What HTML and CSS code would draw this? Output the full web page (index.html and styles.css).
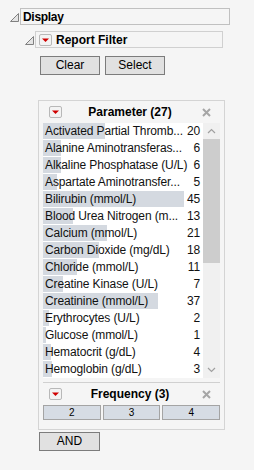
FILE: index.html
```html
<!DOCTYPE html>
<html>
<head>
<meta charset="utf-8">
<link rel="stylesheet" href="styles.css">
</head>
<body>
<div class="report">
  <div class="ohead lvl1">
    <svg class="tri" width="9" height="9" viewBox="0 0 9 9"><polygon points="0.5,8.5 8.5,0.5 8.5,8.5" fill="#e4e4e4" stroke="#808080" stroke-width="1"/></svg>
    <div class="obox bigbox">Display</div>
  </div>
  <div class="ohead lvl2">
    <svg class="tri" width="9" height="9" viewBox="0 0 9 9"><polygon points="0.5,8.5 8.5,0.5 8.5,8.5" fill="#e4e4e4" stroke="#808080" stroke-width="1"/></svg>
    <div class="obox rfbox">
      <span class="menubtn"><svg width="13" height="12" viewBox="0 0 13 12"><polygon points="3,4.5 10,4.5 6.5,8" fill="#d00000"/></svg></span>
      <span class="otitle">Report Filter</span>
    </div>
  </div>
  <div class="btnrow">
    <button class="btn">Clear</button>
    <button class="btn">Select</button>
  </div>

  <div class="panel">
    <div class="phead">
      <span class="menubtn"><svg width="13" height="12" viewBox="0 0 13 12"><polygon points="3,4.5 10,4.5 6.5,8" fill="#d00000"/></svg></span>
      <span class="ptitle">Parameter (27)</span>
      <svg class="close" width="9" height="9" viewBox="0 0 9 9"><path d="M1,1 L8,8 M8,1 L1,8" stroke="#a6a6a6" stroke-width="2"/></svg>
    </div>
    <div class="listwrap">
      <div class="list">
        <div class="row" style="--w:62px"><span>Activated Partial Thromb...</span><span>20</span></div>
        <div class="row" style="--w:18px"><span>Alanine Aminotransferas...</span><span>6</span></div>
        <div class="row" style="--w:18px"><span>Alkaline Phosphatase (U/L)</span><span>6</span></div>
        <div class="row" style="--w:14px"><span>Aspartate Aminotransfer...</span><span>5</span></div>
        <div class="row" style="--w:141px"><span>Bilirubin (mmol/L)</span><span>45</span></div>
        <div class="row" style="--w:30px"><span>Blood Urea Nitrogen (m...</span><span>13</span></div>
        <div class="row" style="--w:64px"><span>Calcium (mmol/L)</span><span>21</span></div>
        <div class="row" style="--w:56px"><span>Carbon Dioxide (mg/dL)</span><span>18</span></div>
        <div class="row" style="--w:34px"><span>Chloride (mmol/L)</span><span>11</span></div>
        <div class="row" style="--w:20px"><span>Creatine Kinase (U/L)</span><span>7</span></div>
        <div class="row" style="--w:115px"><span>Creatinine (mmol/L)</span><span>37</span></div>
        <div class="row" style="--w:6px"><span>Erythrocytes (U/L)</span><span>2</span></div>
        <div class="row" style="--w:3px"><span>Glucose (mmol/L)</span><span>1</span></div>
        <div class="row" style="--w:8px"><span>Hematocrit (g/dL)</span><span>4</span></div>
        <div class="row" style="--w:9px"><span>Hemoglobin (g/dL)</span><span>3</span></div>
      </div>
      <div class="scroll">
        <div class="sarrow"><svg width="9" height="6" viewBox="0 0 9 6"><path d="M1,5 L4.5,1.5 L8,5" fill="none" stroke="#a0a0a0" stroke-width="1.2"/></svg></div>
        <div class="thumb"></div>
        <div class="track"></div>
        <div class="sarrow"><svg width="9" height="6" viewBox="0 0 9 6"><path d="M1,1 L4.5,4.5 L8,1" fill="none" stroke="#a0a0a0" stroke-width="1.2"/></svg></div>
      </div>
    </div>
    <div class="sep"></div>
    <div class="phead">
      <span class="menubtn"><svg width="13" height="12" viewBox="0 0 13 12"><polygon points="3,4.5 10,4.5 6.5,8" fill="#d00000"/></svg></span>
      <span class="ptitle">Frequency (3)</span>
      <svg class="close" width="9" height="9" viewBox="0 0 9 9"><path d="M1,1 L8,8 M8,1 L1,8" stroke="#a6a6a6" stroke-width="2"/></svg>
    </div>
    <div class="freq">
      <span class="fbtn">2</span>
      <span class="fbtn">3</span>
      <span class="fbtn">4</span>
    </div>
  </div>
  <button class="btn andbtn">AND</button>
</div>
</body>
</html>
```

FILE: styles.css
```css
html, body {
  margin: 0;
  padding: 0;
  background: #f5f5f5;
}
body {
  font-family: "Liberation Sans", Arial, sans-serif;
  font-size: 12px;
  color: #000;
  width: 254px;
  height: 470px;
  overflow: hidden;
}
.report {
  padding-top: 8px;
}
.ohead {
  display: flex;
  align-items: flex-start;
}
.lvl1 {
  padding-left: 10px;
}
.lvl2 {
  padding-left: 25px;
  margin-top: 6px;
}
.tri {
  display: block;
  margin-top: 5px;
  margin-right: 1px;
}
.obox {
  box-sizing: border-box;
  height: 17px;
  border: 1px solid #c4c4c4;
  display: flex;
  align-items: center;
  font-weight: bold;
}
.bigbox {
  width: 210px;
  padding-left: 2px;
  border-color: #c0c0c0;
  letter-spacing: -0.3px;
}
.rfbox {
  width: 188px;
  padding-left: 3px;
  border-color: #d0d0d0;
}
.menubtn {
  box-sizing: border-box;
  width: 13px;
  height: 12px;
  border: 1px solid #b8b8b8;
  border-radius: 2px;
  background: #f3f3f3;
  display: inline-flex;
  align-items: center;
  justify-content: center;
  flex: none;
}
.menubtn svg {
  display: block;
  margin: -1px;
}
.otitle {
  margin-left: 4px;
}
.btnrow {
  display: flex;
  gap: 5px;
  padding-left: 40px;
  margin-top: 8px;
}
.btn {
  box-sizing: border-box;
  width: 60px;
  height: 19px;
  padding: 0;
  border: 1px solid #7c7c7c;
  background: #e1e1e1;
  font-family: "Liberation Sans", Arial, sans-serif;
  font-size: 12px;
  color: #000;
  line-height: 17px;
  border-radius: 0;
}
.panel {
  box-sizing: border-box;
  width: 187px;
  margin-left: 38px;
  margin-top: 25px;
  border: 1px solid #d4d4d4;
  padding: 0 3px 9px 4px;
}
.phead {
  height: 22px;
  display: flex;
  align-items: center;
  padding-left: 6px;
  padding-right: 10px;
}
.phead .menubtn {
  margin-top: -1px;
}
.ptitle {
  flex: 1;
  text-align: center;
  font-weight: bold;
  padding-right: 4px;
}
.close {
  display: block;
  flex: none;
}
.listwrap {
  display: flex;
}
.list {
  width: 160px;
  background: #fff;
}
.row {
  box-sizing: border-box;
  height: 16px;
  margin-bottom: 1px;
  display: flex;
  justify-content: space-between;
  align-items: center;
  padding: 0 3px 0 2px;
  background: linear-gradient(#d4d9e0, #d4d9e0) no-repeat 0 0 / var(--w) 100%, #fff;
  white-space: nowrap;
  color: #111;
  letter-spacing: -0.12px;
}
.scroll {
  width: 17px;
  display: flex;
  flex-direction: column;
  background: #f0f0f0;
}
.sarrow {
  height: 16px;
  display: flex;
  align-items: center;
  justify-content: center;
  flex: none;
}
.sarrow svg {
  display: block;
}
.thumb {
  height: 124px;
  background: #cdcdcd;
  flex: none;
}
.track {
  flex: 1;
}
.sep {
  height: 1px;
  background: #d0d0d0;
  margin: 4px 1px 0 0;
}
.freq {
  display: grid;
  grid-template-columns: 1fr 1fr 1fr;
  gap: 2px;
  margin-right: 1px;
}
.fbtn {
  box-sizing: border-box;
  height: 15px;
  border: 1px solid #a4a4a4;
  background: #d6dce4;
  font-size: 10px;
  line-height: 13px;
  text-align: center;
}
.andbtn {
  display: block;
  width: 61px;
  margin-left: 39px;
  margin-top: 2px;
}
```
